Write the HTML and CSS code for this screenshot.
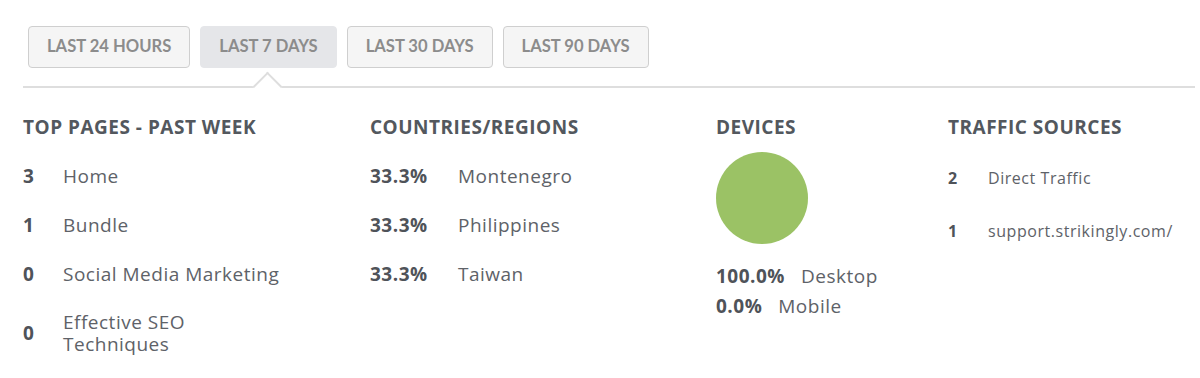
FILE: index.html
```html
<!DOCTYPE html>
<html lang="en">
<head>
<meta charset="utf-8">
<title>Analytics</title>
<link rel="stylesheet" href="styles.css">
</head>
<body>
<div class="page">
  <nav class="tabs">
    <button class="tab">LAST 24 HOURS</button>
    <button class="tab tab-active">LAST 7 DAYS</button>
    <button class="tab">LAST 30 DAYS</button>
    <button class="tab">LAST 90 DAYS</button>
  </nav>
  <div class="divider"><span class="notch"></span></div>

  <div class="stats">
    <section class="col">
      <h2 class="heading">TOP PAGES - PAST WEEK</h2>
      <ul class="list">
        <li class="row"><span class="num">3</span><span class="name">Home</span></li>
        <li class="row"><span class="num">1</span><span class="name">Bundle</span></li>
        <li class="row"><span class="num">0</span><span class="name">Social Media Marketing</span></li>
        <li class="row"><span class="num">0</span><span class="name">Effective SEO Techniques</span></li>
      </ul>
    </section>

    <section class="col">
      <h2 class="heading">COUNTRIES/REGIONS</h2>
      <ul class="list">
        <li class="row"><span class="num pct">33.3%</span><span class="name">Montenegro</span></li>
        <li class="row"><span class="num pct">33.3%</span><span class="name">Philippines</span></li>
        <li class="row"><span class="num pct">33.3%</span><span class="name">Taiwan</span></li>
      </ul>
    </section>

    <section class="col">
      <h2 class="heading">DEVICES</h2>
      <div class="pie"></div>
      <ul class="devices">
        <li class="device"><span class="num">100.0%</span><span class="name">Desktop</span></li>
        <li class="device"><span class="num">0.0%</span><span class="name">Mobile</span></li>
      </ul>
    </section>

    <section class="col">
      <h2 class="heading">TRAFFIC SOURCES</h2>
      <ul class="list list-small">
        <li class="row"><span class="num">2</span><span class="name">Direct Traffic</span></li>
        <li class="row"><span class="num">1</span><span class="name">support.strikingly.com/</span></li>
      </ul>
    </section>
  </div>
</div>
</body>
</html>
```

FILE: styles.css
```css
* { box-sizing: border-box; }

html, body {
  margin: 0;
  padding: 0;
  background: #ffffff;
}

body {
  font-family: "Open Sans", "Liberation Sans", sans-serif;
  color: #5e6268;
}

.page {
  width: 1200px;
  height: 378px;
  overflow: hidden;
}

.tabs {
  display: flex;
  gap: 10px;
  padding: 26px 0 0 28px;
}

.tab {
  height: 42px;
  padding: 0 18px 2px;
  border: 1px solid #cfcfcf;
  border-radius: 4px;
  background: #f5f5f5;
  font-family: Lato, "Open Sans", sans-serif;
  font-weight: 700;
  font-size: 16.6px;
  color: #8c8c8c;
  cursor: pointer;
}

.tab-active {
  background: #e5e6e9;
  border-color: #e5e6e9;
}

.divider {
  position: relative;
  margin: 18px 5px 0 23px;
  border-top: 2px solid #dedede;
}

.notch {
  position: absolute;
  left: 234px;
  top: -12px;
  width: 21px;
  height: 21px;
  background: #ffffff;
  border-top: 2px solid #dedede;
  border-left: 2px solid #dedede;
  transform: rotate(45deg);
}

.stats {
  display: grid;
  grid-template-columns: 347px 346px 232px 1fr;
  padding: 27px 0 0 23px;
}

.heading {
  margin: 0;
  font-size: 19px;
  letter-spacing: 0.5px;
  line-height: 24px;
  font-weight: 700;
  color: #53585e;
}

.list {
  list-style: none;
  margin: 25px 0 0;
  padding: 0;
  display: flex;
  flex-direction: column;
  gap: 25px;
}

.row {
  display: flex;
  align-items: center;
  min-height: 24px;
  font-size: 19px;
  letter-spacing: 0.5px;
}

.num {
  flex: none;
  width: 40px;
  font-weight: 700;
  line-height: 24px;
  color: #4f5359;
}

.pct {
  width: 88px;
}

.name {
  max-width: 222px;
  line-height: 22px;
  color: #5e6268;
}

.list-small {
  margin-top: 27px;
  gap: 29px;
}

.list-small .row {
  font-size: 16px;
  letter-spacing: 0.55px;
}

.pie {
  width: 92px;
  height: 92px;
  margin-top: 13px;
  border-radius: 50%;
  background: #9bc265;
}

.devices {
  list-style: none;
  margin: 17px 0 0;
  padding: 0;
}

.device {
  display: flex;
  gap: 16px;
  font-size: 19px;
  letter-spacing: 0.5px;
  line-height: 30px;
}

.device .num {
  width: auto;
  line-height: 30px;
}

.device .name {
  line-height: 30px;
}
```
